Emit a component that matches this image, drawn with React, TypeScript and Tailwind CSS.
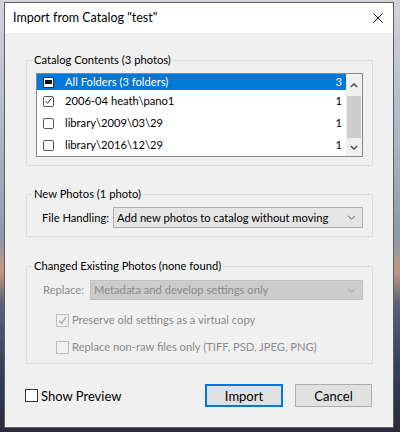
import React from "react";

function Check({ className = "" }: { className?: string }) {
  return (
    <svg viewBox="0 0 12 12" className={className} fill="none">
      <path d="M2.2 6.2 L4.8 9 L10 2.4" stroke="currentColor" strokeWidth="1.3" />
    </svg>
  );
}

function Chevron({ up = false, className = "", w = 1.2 }: { up?: boolean; className?: string; w?: number }) {
  return (
    <svg viewBox="0 0 10 6" className={className} fill="none">
      <path d={up ? "M1 5 L5 1 L9 5" : "M1 1 L5 5 L9 1"} stroke="currentColor" strokeWidth={w} />
    </svg>
  );
}

const rows = [
  { label: "All Folders (3 folders)", count: "3", state: "mixed", selected: true },
  { label: "2006-04 heath\\pano1", count: "1", state: "checked", selected: false },
  { label: "library\\2009\\03\\29", count: "1", state: "off", selected: false },
  { label: "library\\2016\\12\\29", count: "1", state: "off", selected: false },
];

function RowBox({ state }: { state: string }) {
  if (state === "mixed")
    return (
      <span className="flex h-[11px] w-[11px] items-center justify-center border border-[#333] bg-white">
        <span className="h-[4px] w-[7px] bg-[#111]" />
      </span>
    );
  return (
    <span className="flex h-[11px] w-[11px] items-center justify-center rounded-[2px] border border-[#555] bg-white text-[#222]">
      {state === "checked" && <Check className="h-[10px] w-[10px]" />}
    </span>
  );
}

function Group({ title, children, className = "" }: { title: string; children: React.ReactNode; className?: string }) {
  return (
    <fieldset className={`ml-[21px] mr-[20px] border border-[#dcdcdc] ${className}`}>
      <legend className="ml-[5px] px-[2px] leading-[16px]">{title}</legend>
      {children}
    </fieldset>
  );
}

export default function App() {
  return (
    <div className="h-[432px] w-[400px] overflow-hidden whitespace-nowrap bg-[linear-gradient(to_bottom,#d4d3da_0%,#b0b8c4_30%,#8b9aa8_55%,#c49684_63%,#5a6478_70%,#34405a_85%,#2c2a3a_100%)] pl-[4px] pt-[2px] font-['Segoe_UI','Lato',sans-serif] text-[11.2px] leading-[16px] text-black">
      <div className="flex h-[426px] w-[390px] flex-col border border-[#5f5f5f] bg-[#f0f0f0]">
        <div className="flex h-[30px] items-center justify-between bg-white pl-[8px] pr-[8px]">
          <span className="text-[12.5px]">Import from Catalog "test"</span>
          <svg viewBox="0 0 10 10" className="mr-[2px] h-[10px] w-[10px]" fill="none">
            <path d="M0.5 0.5 L9.5 9.5 M9.5 0.5 L0.5 9.5" stroke="#111" strokeWidth="1" />
          </svg>
        </div>

        <Group title="Catalog Contents (3 photos)" className="mt-[19px] pb-[8px]">
          <div className="mx-[9px] mt-[5px] flex h-[84px] overflow-hidden border border-[#828790] bg-white">
            <div className="flex-1 overflow-hidden">
              {rows.map((r) => (
                <div
                  key={r.label}
                  className={`flex items-center pl-[6px] pr-[4px] ${r.selected ? "h-[16px] bg-[#0078d7] leading-[14px] text-white" : "h-[22px]"}`}
                >
                  <RowBox state={r.state} />
                  <span className="ml-[11px] flex-1">{r.label}</span>
                  <span>{r.count}</span>
                </div>
              ))}
            </div>
            <div className="flex w-[16px] flex-col bg-[#f0f0f0] text-[#505050]">
              <div className="flex h-[22px] items-center justify-center">
                <Chevron up w={1.8} className="h-[5px] w-[8px]" />
              </div>
              <div className="mx-[1px] h-[42px] bg-[#cdcdcd]" />
              <div className="flex flex-1 items-center justify-center">
                <Chevron w={1.8} className="h-[5px] w-[8px]" />
              </div>
            </div>
          </div>
        </Group>

        <Group title="New Photos (1 photo)" className="mt-[20px] pb-[8px]">
          <div className="mt-[5px] flex items-center pl-[15px] pr-[9px]">
            <span className="mr-[4px]">File Handling:</span>
            <div className="flex h-[21px] flex-1 items-center justify-between border border-[#adadad] bg-[#e5e5e5] pl-[3px] pr-[6px]">
              <span>Add new photos to catalog without moving</span>
              <Chevron className="h-[5px] w-[9px] text-[#555]" />
            </div>
          </div>
        </Group>

        <Group title="Changed Existing Photos (none found)" className="mt-[21px] pb-[8px]">
          <div className="mt-[6px] flex items-center pl-[16px] pr-[9px] text-[#8a8a8a]">
            <span className="mr-[6px]">Replace:</span>
            <div className="flex h-[20px] flex-1 items-center justify-between border border-[#bfbfbf] bg-[#cccccc] pl-[3px] pr-[6px]">
              <span>Metadata and develop settings only</span>
              <Chevron className="h-[5px] w-[9px] text-[#a6a6a6]" />
            </div>
          </div>
          <div className="mt-[12px] flex items-center pl-[29px] text-[#8a8a8a]">
            <span className="flex h-[13px] w-[13px] items-center justify-center border border-[#bcbcbc] bg-[#f0f0f0] text-[#a0a0a0]">
              <Check className="h-[11px] w-[11px]" />
            </span>
            <span className="ml-[3px]">Preserve old settings as a virtual copy</span>
          </div>
          <div className="mt-[11px] flex items-center pl-[29px] text-[#8a8a8a]">
            <span className="h-[13px] w-[13px] border border-[#bcbcbc] bg-[#f0f0f0]" />
            <span className="ml-[3px]">Replace non-raw files only (TIFF, PSD, JPEG, PNG)</span>
          </div>
        </Group>

        <div className="mt-[20px] flex items-center pl-[20px] pr-[21px]">
          <span className="h-[13px] w-[13px] border border-[#333] bg-white" />
          <span className="ml-[3px] flex-1 text-[13px]">Show Preview</span>
          <button className="h-[23px] w-[78px] border-2 border-[#0078d7] bg-[#e1e1e1] text-[13px]">Import</button>
          <button className="ml-[12px] h-[23px] w-[77px] border border-[#adadad] bg-[#e1e1e1] text-[13px]">Cancel</button>
        </div>
      </div>
    </div>
  );
}
